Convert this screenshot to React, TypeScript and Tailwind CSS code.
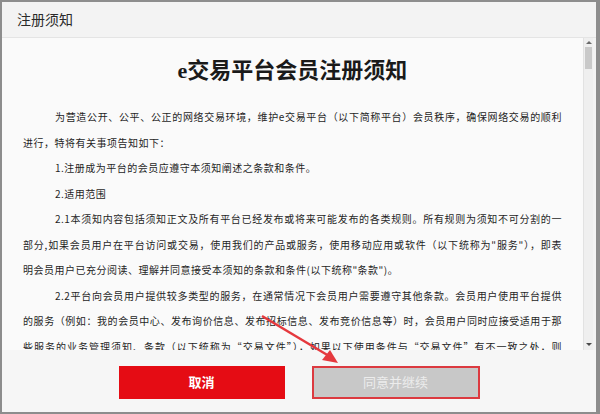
import React from "react";

const bodyFont = {
  fontFamily: '"Noto Sans CJK SC", "Liberation Sans", sans-serif',
};

type Para = { lines: string[] };

const paragraphs: Para[] = [
  {
    lines: [
      "为营造公开、公平、公正的网络交易环境，维护e交易平台（以下简称平台）会员秩序，确保网络交易的顺利",
      "进行，特将有关事项告知如下：",
    ],
  },
  { lines: ["1.注册成为平台的会员应遵守本须知阐述之条款和条件。"] },
  { lines: ["2.适用范围"] },
  {
    lines: [
      "2.1本须知内容包括须知正文及所有平台已经发布或将来可能发布的各类规则。所有规则为须知不可分割的一",
      "部分,如果会员用户在平台访问或交易，使用我们的产品或服务，使用移动应用或软件（以下统称为\"服务\"），即表",
      "明会员用户已充分阅读、理解并同意接受本须知的条款和条件(以下统称\"条款\")。",
    ],
  },
  {
    lines: [
      "2.2平台向会员用户提供较多类型的服务，在通常情况下会员用户需要遵守其他条款。会员用户使用平台提供",
      "的服务（例如：我的会员中心、发布询价信息、发布招标信息、发布竞价信息等）时，会员用户同时应接受适用于那",
      "些服务的业务管理须知、条款（以下统称为“交易文件”），如果以下使用条件与“交易文件”有不一致之处，则",
      "以“交易文件”为准。",
    ],
  },
];

function Scrollbar() {
  return (
    <div className="w-[10px] flex flex-col bg-[#efefef] border-l border-[#e2e2e2]">
      <div className="h-[9px] flex items-center justify-center">
        <div className="w-0 h-0 border-l-[3px] border-r-[3px] border-b-[3px] border-l-transparent border-r-transparent border-b-[#6a6a6a]" />
      </div>
      <div className="h-[22px] mx-[1px] bg-[#c9c9c9]" />
      <div className="flex-1" />
      <div className="h-[12px] flex items-center justify-center">
        <div className="w-0 h-0 border-l-[3px] border-r-[3px] border-t-[3px] border-l-transparent border-r-transparent border-t-[#4a4a4a]" />
      </div>
    </div>
  );
}

export default function App() {
  return (
    <div
      className="relative w-[600px] h-[414px] flex flex-col bg-[#f6f6f6] border-t-2 border-l-2 border-b-2 border-r-4 border-[#8d8d8d]"
      style={bodyFont}
    >
      <div className="h-[36px] shrink-0 flex items-center px-[15px] bg-[#f3f3f3] border-b border-[#e4e4e4] text-[14px] text-[#2a2a2a]">
        注册须知
      </div>

      <div className="h-[312px] shrink-0 flex">
        <div className="flex-1 overflow-hidden bg-[#fafafa] px-[21px]">
          <h1
            className="mt-[20px] mb-[20px] text-center text-[22px] leading-[26px] font-semibold text-[#1a1a1a]"
            style={{
              fontFamily: '"Liberation Serif", "Noto Sans CJK SC", serif',
            }}
          >
            e交易平台会员注册须知
          </h1>
          <div className="text-[10px] leading-[25.5px] tracking-[0.5px] text-[#1f1f1f]">
            {paragraphs.map((p, i) => (
              <p key={i}>
                {p.lines.map((line, j) => (
                  <span
                    key={j}
                    className={
                      "block whitespace-nowrap " +
                      (j === 0 ? "pl-[32px] " : "") +
                      (j < p.lines.length - 1 ? "[text-align-last:justify]" : "")
                    }
                  >
                    {line}
                  </span>
                ))}
              </p>
            ))}
          </div>
        </div>
        <Scrollbar />
        <div className="w-[3px] bg-[#f3f3f3]" />
      </div>

      <div className="flex-1 flex items-center justify-center gap-[27px] pt-[2px]">
        <button className="w-[166px] h-[33px] bg-[#e50c14] text-white text-[13px] font-semibold">
          取消
        </button>
        <button className="w-[168px] h-[33px] border-2 border-[#dc3a40] bg-[#c8c8c8] text-[#ececec] text-[13px]">
          同意并继续
        </button>
      </div>

      <svg
        className="absolute left-[-2px] top-[-2px] pointer-events-none"
        width="600"
        height="414"
        viewBox="0 0 600 414"
      >
        <line
          x1="262"
          y1="316"
          x2="329"
          y2="356"
          stroke="#e5393e"
          strokeWidth="2.5"
        />
        <polygon points="338,363 322,360 330,350" fill="#e5393e" />
      </svg>
    </div>
  );
}
